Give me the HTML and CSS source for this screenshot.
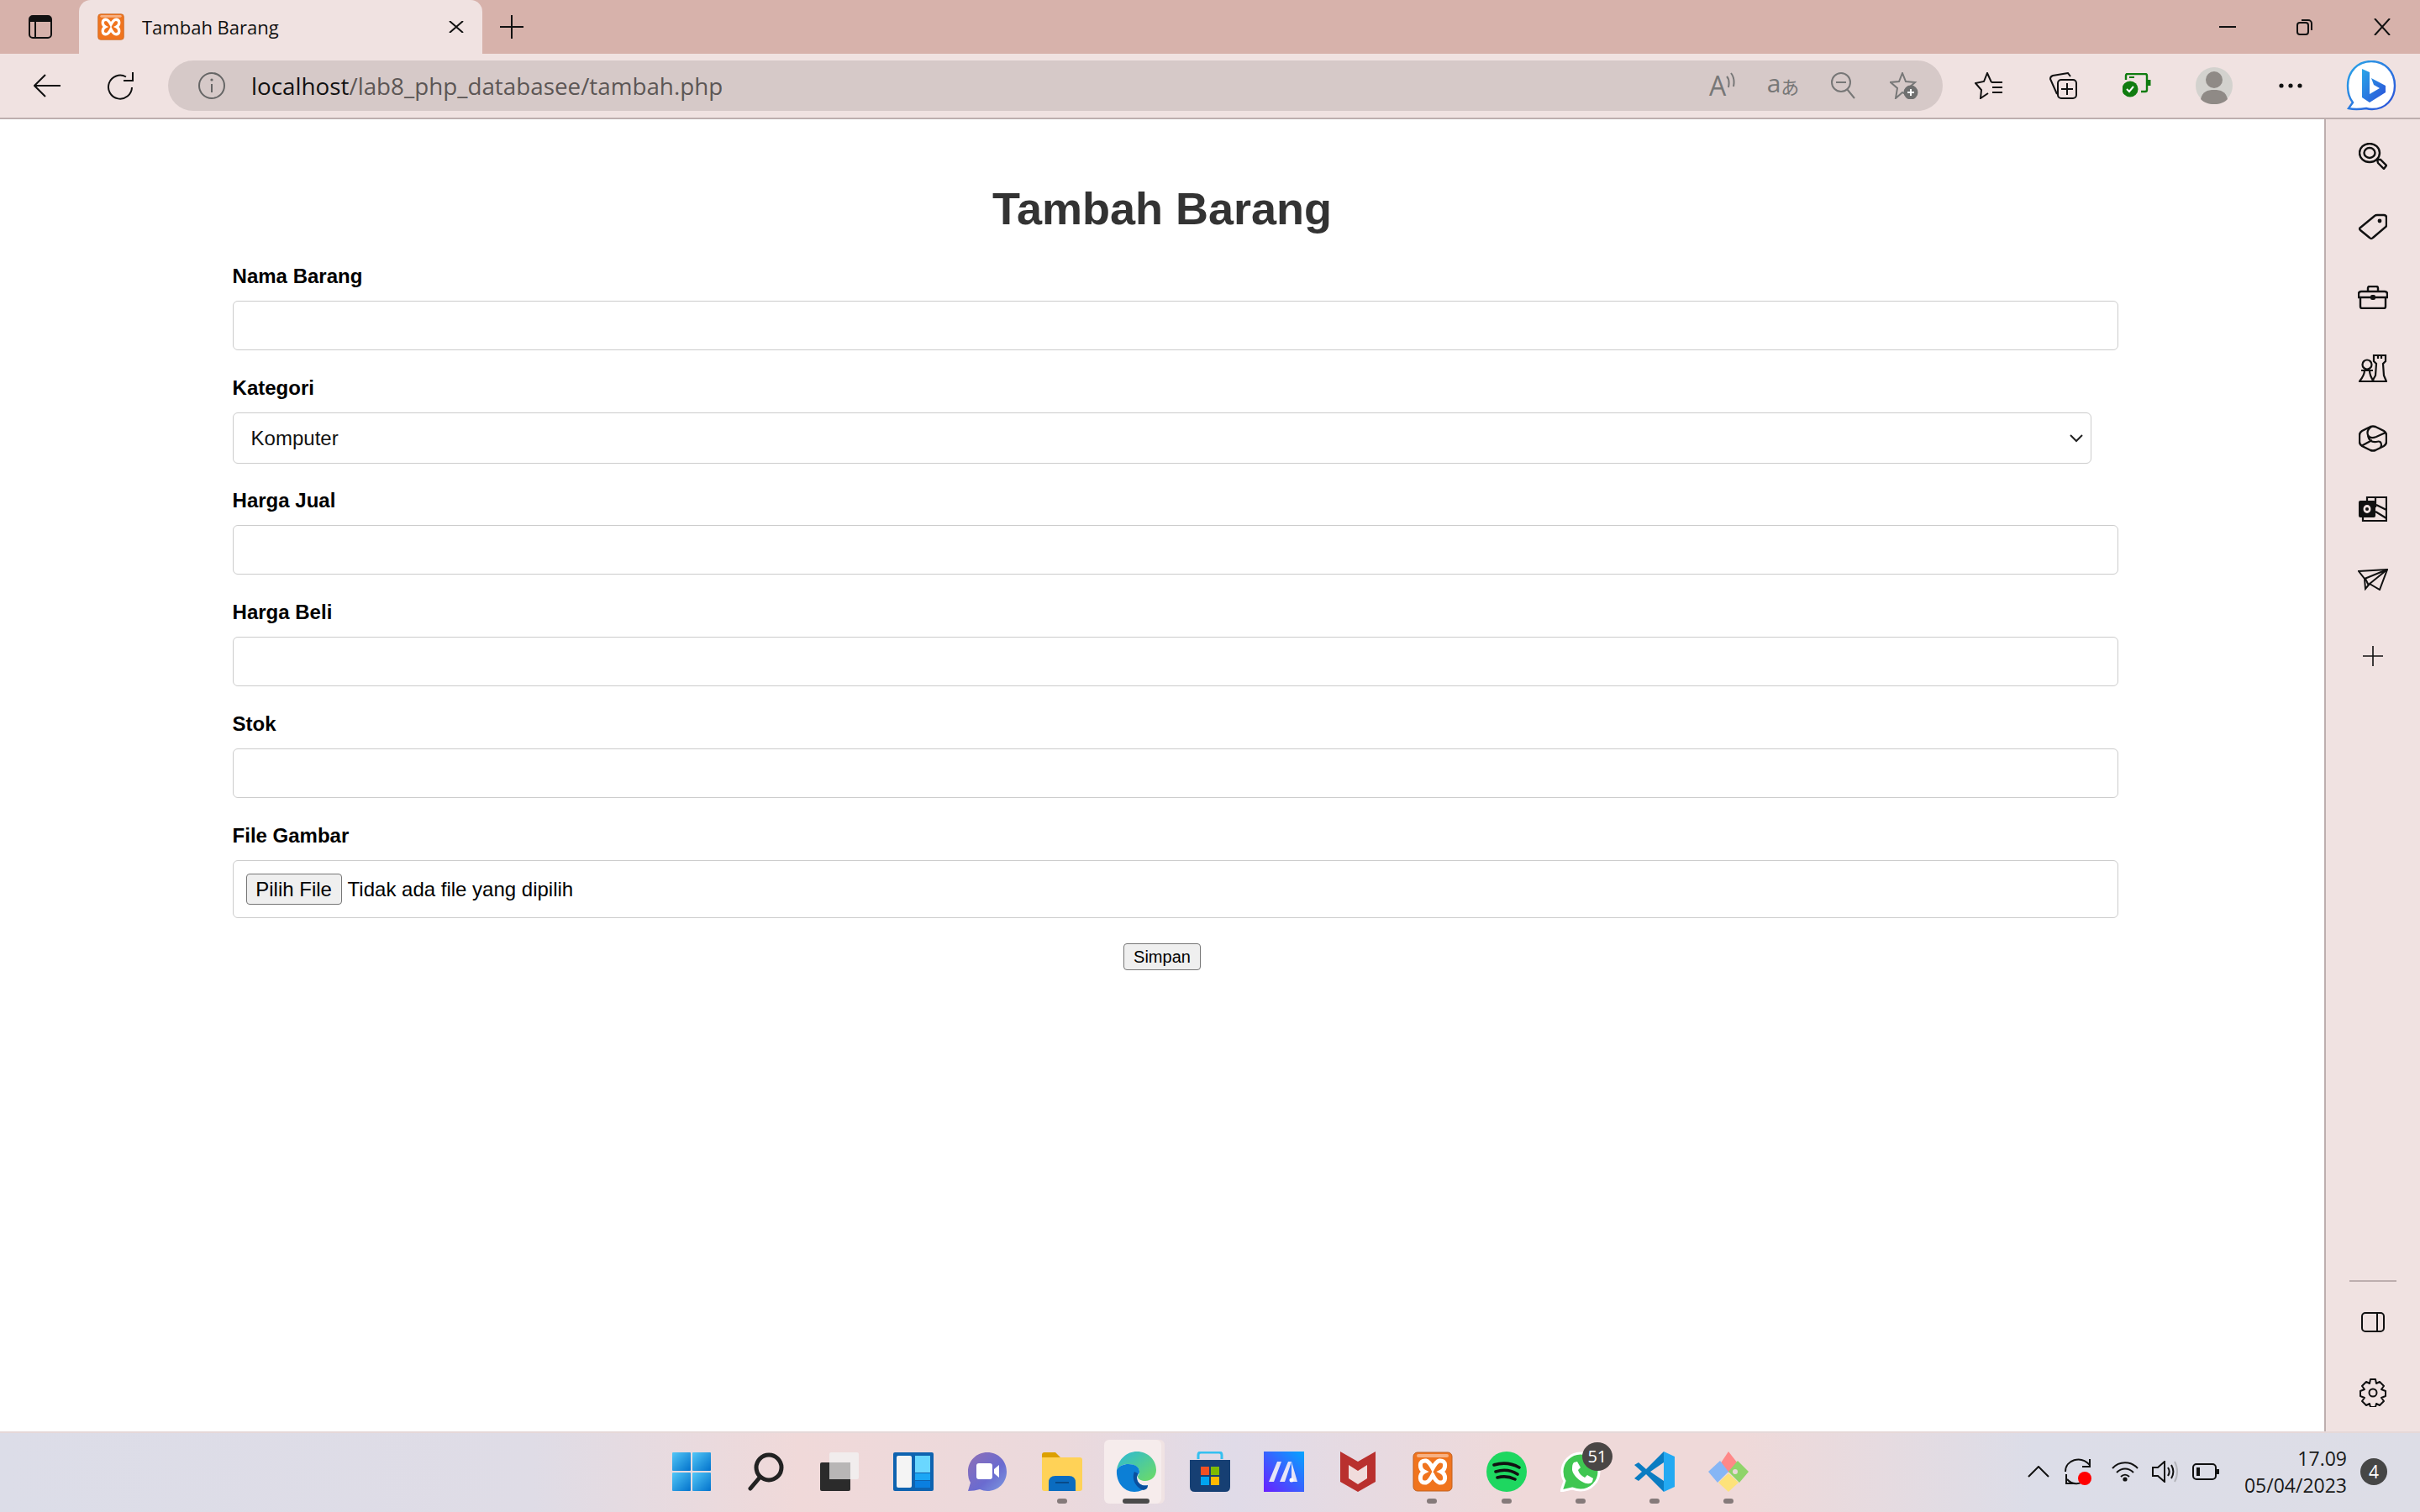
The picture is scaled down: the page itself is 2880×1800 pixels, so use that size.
FILE: index.html
```html
<!DOCTYPE html>
<html lang="en">
  <head>
    <meta charset="UTF-8" />
    <title>Tambah Barang</title>
    <link rel="stylesheet" href="styles.css">
  </head>
  <body>
    <svg class="defs" width="0" height="0">
      <defs>
        <linearGradient id="winGrad" x1="0" y1="0" x2="1" y2="1"><stop offset="0" stop-color="#52c7f7"/><stop offset="1" stop-color="#0272cc"/></linearGradient>
        <linearGradient id="edgeGrad" x1="0" y1="0" x2="1" y2="1"><stop offset="0" stop-color="#2bb8d8"/><stop offset="1" stop-color="#6fdc62"/></linearGradient>
        <linearGradient id="chatGrad" x1="0" y1="0" x2="1" y2="1"><stop offset="0" stop-color="#8f6fb6"/><stop offset=".6" stop-color="#6a6bd0"/><stop offset="1" stop-color="#7d9be0"/></linearGradient>
        <linearGradient id="maGrad" x1="0" y1="1" x2="1" y2="0"><stop offset="0" stop-color="#6a1fff"/><stop offset="1" stop-color="#05a5ff"/></linearGradient>
        <linearGradient id="bingGrad" x1="0" y1="0" x2="1" y2="1"><stop offset="0" stop-color="#2aa7e8"/><stop offset="1" stop-color="#2b4fd8"/></linearGradient>
        <symbol id="xampp" viewBox="0 0 48 48">
          <rect x="1" y="1" width="46" height="46" rx="5" fill="#f0741e" stroke="#c2601e"/>
          <rect x="5" y="3" width="38" height="4" rx="2" fill="#f7b184"/>
          <path d="M16 11C7 10 8 21 14 24C8 27 7 38 16 37C20 36 22 32 24 28C26 32 28 36 32 37C41 38 40 27 34 24C40 21 41 10 32 11C28 12 26 16 24 20C22 16 20 12 16 11Z" fill="#f0741e" stroke="#fff" stroke-width="5"/>
        </symbol>
      </defs>
    </svg>

    <div class="tabstrip">
      <div class="tab-toggle">
        <svg width="28" height="28" viewBox="0 0 28 28"><rect x="1" y="1" width="26" height="26" rx="4" fill="none" stroke="#111" stroke-width="2"/><path d="M2 2h24v6H2z" fill="#111"/><path d="M8 8v18" stroke="#111" stroke-width="2"/></svg>
      </div>
      <div class="tab">
        <svg class="favicon" width="32" height="32"><use href="#xampp"/></svg>
        <span class="tab-title">Tambah Barang</span>
        <svg class="tab-close" width="18" height="14" viewBox="0 0 18 14"><path d="M1 0l16 14M17 0L1 14" stroke="#111" stroke-width="2"/></svg>
      </div>
      <svg class="new-tab" width="28" height="28" viewBox="0 0 28 28"><path d="M14 0v28M0 14h28" stroke="#111" stroke-width="2"/></svg>
      <div class="window-controls">
        <svg width="20" height="20" viewBox="0 0 20 20"><path d="M0 10h20" stroke="#111" stroke-width="2"/></svg>
        <svg width="20" height="20" viewBox="0 0 20 20"><rect x="1" y="5" width="13" height="14" rx="3" fill="none" stroke="#111" stroke-width="2"/><path d="M6 2h8a4 4 0 0 1 4 4v8" fill="none" stroke="#111" stroke-width="2"/></svg>
        <svg width="20" height="20" viewBox="0 0 20 20"><path d="M1 0l18 20M19 0L1 20" stroke="#111" stroke-width="2"/></svg>
      </div>
    </div>

    <div class="toolbar">
      <div class="tool">
        <svg width="32" height="28" viewBox="0 0 32 28"><path d="M32 14H2M14 1L1 14l13 13" fill="none" stroke="#111" stroke-width="2"/></svg>
      </div>
      <div class="tool">
        <svg width="34" height="33" viewBox="0 0 34 33"><path d="M23 5.500A14 14 0 1 0 30 18" fill="none" stroke="#111" stroke-width="2"/><path d="M31 0v10H20" fill="none" stroke="#111" stroke-width="2"/></svg>
      </div>
      <div class="address">
        <svg class="info" width="32" height="32" viewBox="0 0 32 32"><circle cx="16" cy="16" r="15" fill="none" stroke="#666" stroke-width="2"/><path d="M16 14v10" stroke="#666" stroke-width="2"/><circle cx="16" cy="9" r="1.600" fill="#666"/></svg>
        <span class="url"><span class="host">localhost</span>/lab8_php_databasee/tambah.php</span>
        <div class="omni-icons">
          <div class="omni omni-read">
            <span class="omni-a">A</span>
            <svg width="12" height="20" viewBox="0 0 12 20"><path d="M1 5c3 3 3 8 2 13M6 1c4 5 4 11 3 16" fill="none" stroke="#777" stroke-width="2"/></svg>
          </div>
          <div class="omni">
            <span class="omni-tr">a</span><span class="omni-tr2">あ</span>
          </div>
          <div class="omni">
            <svg width="30" height="32" viewBox="0 0 30 32"><circle cx="12" cy="12" r="11" fill="none" stroke="#777" stroke-width="2"/><path d="M6 12h12M19 20l9 11" fill="none" stroke="#777" stroke-width="2"/></svg>
          </div>
          <div class="omni">
            <svg width="34" height="32" viewBox="0 0 34 32"><path d="M15 1l4 10 11 1-8 7 2 10-9-5-8 7 2-12-8-7 10-1z" fill="none" stroke="#777" stroke-width="2"/><circle cx="25" cy="24" r="8.500" fill="#6f6f6f"/><path d="M25 20v8M21 24h8" stroke="#fff" stroke-width="2"/></svg>
          </div>
        </div>
      </div>
      <div class="tool tool-fav">
        <svg width="34" height="32" viewBox="0 0 34 32"><path d="M20 12L15 1 11 11 1 13l7 8-1 10 9-6" fill="none" stroke="#111" stroke-width="2"/><path d="M20 12h13M21 18h12M21 24h12" stroke="#111" stroke-width="2"/></svg>
      </div>
      <div class="tool">
        <svg width="34" height="32" viewBox="0 0 34 32"><path d="M10 26L2 8q0-3 3-4l18-3 3 4" fill="none" stroke="#111" stroke-width="2"/><rect x="11" y="9" width="22" height="22" rx="4" fill="none" stroke="#111" stroke-width="2"/><path d="M22 13v14M15 20h14" stroke="#111" stroke-width="2"/></svg>
      </div>
      <div class="tool">
        <svg width="34" height="30" viewBox="0 0 34 30"><path d="M4 8V3q0-2 2-2h21q2 0 2 2v17q0 2-2 2h-5" fill="none" stroke="#107c10" stroke-width="2.400"/><rect x="30" y="8" width="3.500" height="7" fill="#107c10"/><path d="M8 5h6" stroke="#107c10" stroke-width="2"/><circle cx="9" cy="19" r="9.500" fill="#107c10"/><path d="M5 19l3 3 5-6" fill="none" stroke="#fff" stroke-width="2"/></svg>
      </div>
      <div class="tool tool-avatar">
        <svg width="44" height="44" viewBox="0 0 44 44"><circle cx="22" cy="22" r="22" fill="#d3d2ce"/><ellipse cx="22" cy="15" rx="10" ry="10" fill="#8f8a86"/><path d="M6 38c2-9 8-11 16-11s14 2 16 11c-4 4-9 6-16 6S10 42 6 38z" fill="#8f8a86"/></svg>
      </div>
      <div class="tool tool-more">
        <svg width="28" height="6" viewBox="0 0 28 6"><circle cx="3" cy="3" r="2.600" fill="#111"/><circle cx="14" cy="3" r="2.600" fill="#111"/><circle cx="25" cy="3" r="2.600" fill="#111"/></svg>
      </div>
      <div class="tool tool-bing">
        <svg width="60" height="60" viewBox="0 0 60 60"><path d="M30 1C14 1 2 13 2 30c0 8 2 15 6 20l-5 7c8 2 15 1 21 0 3 1 5 1 7 1 16 0 27-12 27-28C58 13 46 1 30 1z" fill="#fff" stroke="url(#bingGrad)" stroke-width="2.400"/><path d="M19 10l9 4v26l12-7-7-4-3-8 17 9v8L28 50l-9-6z" fill="url(#bingGrad)"/></svg>
      </div>
    </div>

    <div class="main">
      <div class="page">
        <h1>Tambah Barang</h1>
        <form class="form">
          <label for="nama">Nama Barang</label>
          <input type="text" id="nama" />

          <label for="kategori">Kategori</label>
          <div class="select-wrap">
            <select id="kategori">
              <option>Komputer</option>
            </select>
            <svg class="select-arrow" width="16" height="10" viewBox="0 0 16 10"><path d="M1 1l7 7 7-7" fill="none" stroke="#222" stroke-width="2"/></svg>
          </div>

          <label for="jual">Harga Jual</label>
          <input type="text" id="jual" />

          <label for="beli">Harga Beli</label>
          <input type="text" id="beli" />

          <label for="stok">Stok</label>
          <input type="text" id="stok" />

          <label>File Gambar</label>
          <div class="file-box">
            <button type="button" class="file-btn">Pilih File</button>
            <span>Tidak ada file yang dipilih</span>
          </div>

          <div class="actions">
            <button type="button" class="save-btn">Simpan</button>
          </div>
        </form>
      </div>

      <div class="sidebar">
        <div class="side-item">
          <svg width="34" height="32" viewBox="0 0 34 32"><ellipse cx="13" cy="12" rx="12" ry="11" fill="none" stroke="#111" stroke-width="2.400"/><ellipse cx="13" cy="12" rx="6.500" ry="6" fill="none" stroke="#111" stroke-width="2.400"/><path d="M22 20l4 0 7 7-3 4-7-7z" fill="none" stroke="#111" stroke-width="2.400"/></svg>
        </div>
        <div class="side-item">
          <svg width="34" height="32" viewBox="0 0 34 32"><path d="M2 17L19 3q1-1 3-1h8q3 0 3 3v9q0 2-2 3L17 29q-2 2-4 0L2 20q-2-2 0-3z" fill="none" stroke="#111" stroke-width="2.400"/><circle cx="25" cy="9" r="2.400" fill="#111"/></svg>
        </div>
        <div class="side-item">
          <svg width="36" height="28" viewBox="0 0 36 28"><path d="M12 7V3q0-2 2-2h8q2 0 2 2v4" fill="none" stroke="#111" stroke-width="2.400"/><path d="M1 10q0-3 3-3h28q3 0 3 3v4H1zM3 14v11q0 2 2 2h26q2 0 2-2V14" fill="none" stroke="#111" stroke-width="2.400"/><rect x="15" y="11" width="6" height="6" rx="2" fill="#111"/></svg>
        </div>
        <div class="side-item">
          <svg width="34" height="34" viewBox="0 0 34 34"><path d="M18 2h14v7l-3 3 1 14 3 7H16l4-7 1-14-3-3zM23 2v4M27 2v4" fill="none" stroke="#111" stroke-width="2.200"/><circle cx="10" cy="13" r="5.500" fill="none" stroke="#111" stroke-width="2.200"/><path d="M3 20h14M7 20c0 5-2 8-6 13h17c-3-4-5-8-5-13" fill="none" stroke="#111" stroke-width="2.200"/></svg>
        </div>
        <div class="side-item">
          <svg width="34" height="32" viewBox="0 0 34 32"><path d="M14 2q3-1 6 0l10 5q3 2 3 5v8q0 3-3 5l-10 5q-3 1-6 0L4 25q-3-2-3-5v-8q0-3 3-5z" fill="none" stroke="#111" stroke-width="2.400"/><path d="M32 9L21 14Q13 17 11 12Q9 6 15 2M11 13Q13 21 21 20Q27 18 27 24L26 27M3 25L16 18" fill="none" stroke="#111" stroke-width="2.200"/></svg>
        </div>
        <div class="side-item">
          <svg width="34" height="30" viewBox="0 0 34 30"><path d="M10 6V1h23v28H5v-7M20 1v12M33 16L21 10M33 26L20 18" fill="none" stroke="#111" stroke-width="2.200"/><rect x="0" y="5" width="20" height="20" rx="2" fill="#111"/><ellipse cx="10" cy="15" rx="4.500" ry="5" fill="#f0e2e1"/><circle cx="10" cy="15" r="2" fill="#111"/></svg>
        </div>
        <div class="side-item">
          <svg width="36" height="26" viewBox="0 0 36 26"><path d="M1 3L35 1 26 25l-12-7-5 6-1-12z" fill="none" stroke="#111" stroke-width="2"/><path d="M8 12L35 1 14 18M9 12l4 8" fill="none" stroke="#111" stroke-width="2"/></svg>
        </div>
        <div class="side-item side-add">
          <svg width="24" height="24" viewBox="0 0 24 24"><path d="M12 0v24M0 12h24" stroke="#111" stroke-width="1.600"/></svg>
        </div>
        <div class="side-bottom">
          <div class="side-rule"></div>
          <div class="side-item">
            <svg width="28" height="24" viewBox="0 0 28 24"><rect x="1" y="1" width="26" height="22" rx="4" fill="none" stroke="#111" stroke-width="2"/><path d="M19 1v22" stroke="#111" stroke-width="2"/></svg>
          </div>
          <div class="side-item">
            <svg width="32" height="34" viewBox="0 0 32 34"><path d="M13 1h6l1 5 4-2 5 5-3 4 5 2v6l-5 2 3 4-5 5-4-2-1 4h-6l-1-4-4 2-5-5 3-4-5-2v-6l5-2-3-4 5-5 4 2z" fill="none" stroke="#111" stroke-width="2" stroke-linejoin="round"/><circle cx="16" cy="17" r="4.500" fill="none" stroke="#111" stroke-width="2"/></svg>
          </div>
        </div>
      </div>
    </div>

    <div class="taskbar">
      <div></div>
      <div class="apps">
        <div class="app">
          <svg width="46" height="46" viewBox="0 0 46 46"><g fill="url(#winGrad)"><rect width="22" height="22" rx="1"/><rect x="24" width="22" height="22" rx="1"/><rect y="24" width="22" height="22" rx="1"/><rect x="24" y="24" width="22" height="22" rx="1"/></g></svg>
        </div>
        <div class="app">
          <svg width="44" height="46" viewBox="0 0 44 46"><ellipse cx="26" cy="18" rx="15" ry="15" fill="none" stroke="#222" stroke-width="5"/><path d="M15 30L4 43" stroke="#222" stroke-width="5" stroke-linecap="round"/></svg>
        </div>
        <div class="app">
          <svg width="48" height="46" viewBox="0 0 48 46"><rect x="1" y="12" width="36" height="34" rx="2" fill="#2b2b2b"/><rect x="12" y="0" width="35" height="32" rx="2" fill="#f1eded"/><rect x="12" y="12" width="25" height="20" fill="#b8b6b6"/></svg>
        </div>
        <div class="app">
          <svg width="48" height="46" viewBox="0 0 48 46"><rect width="48" height="46" rx="2" fill="#0e63b0"/><rect x="4" y="4" width="18" height="38" rx="2" fill="#f4f4f4"/><rect x="26" y="4" width="18" height="20" fill="#6ad7ff"/><rect x="26" y="25" width="18" height="8" fill="#1ba7f5"/><rect x="26" y="34" width="18" height="8" fill="#0a7fe0"/></svg>
        </div>
        <div class="app">
          <svg width="46" height="46" viewBox="0 0 46 46"><path d="M23 0C10 0 0 10 0 23c0 6 1 10 3 13L0 46c5 0 10-1 14-2 3 1 6 2 9 2 13 0 23-10 23-23S36 0 23 0z" fill="url(#chatGrad)"/><rect x="10" y="13" width="19" height="19" rx="3" fill="#fff"/><path d="M31 20l6-5v15l-6-5z" fill="#fff"/></svg>
        </div>
        <div class="app running">
          <svg width="48" height="46" viewBox="0 0 48 46"><path d="M0 3q0-3 3-3h13l6 6h-22z" fill="#dca000"/><path d="M0 6h45q3 0 3 3v34q0 3-3 3H3q-3 0-3-3z" fill="#ffd257"/><path d="M8 46V36q0-8 8-8h16q8 0 8 8v10z" fill="#0a6cc0"/><path d="M16 36h16" stroke="#084a88" stroke-width="2"/></svg>
        </div>
        <div class="app active running">
          <svg width="48" height="48" viewBox="0 0 48 48"><path d="M1 22C3 9 13 0 25 0c13 0 23 10 23 22 0 8-6 13-13 13-4 0-9-2-9-5 0-2 2-2 2-6 0-6-7-9-13-9-7 0-12 3-14 7z" fill="url(#edgeGrad)"/><path d="M1 22c3-5 8-7 14-7 7 0 13 3 13 9 0 3-3 4-3 7 0 8 8 11 13 9-4 5-9 8-16 8C9 48 0 36 1 22z" fill="#0c7fd6"/><path d="M22 24c-3 6-1 18 11 22 3-1 5-2 5-6-5 2-13-1-13-9 0-2 1-3 1-5z" fill="#0a4f9e"/></svg>
        </div>
        <div class="app">
          <svg width="48" height="48" viewBox="0 0 48 48"><path d="M10 9V4q0-3 3-3h22q3 0 3 3v5" fill="none" stroke="#35c0f0" stroke-width="3"/><path d="M0 10h48v32q0 6-6 6H6q-6 0-6-6z" fill="#163f73"/><rect x="13" y="18" width="10" height="10" fill="#f25022"/><rect x="25" y="18" width="10" height="10" fill="#7fba00"/><rect x="13" y="30" width="10" height="10" fill="#00a4ef"/><rect x="25" y="30" width="10" height="10" fill="#ffb900"/></svg>
        </div>
        <div class="app">
          <svg width="48" height="48" viewBox="0 0 48 48"><rect width="48" height="48" fill="url(#maGrad)"/><path d="M6 36l10-24h5L12 36zM19 36l10-24h4L25 36zM33 12l7 24h-7z" fill="#e6e4f7"/><circle cx="33" cy="34" r="2.500" fill="#fff"/></svg>
        </div>
        <div class="app">
          <svg width="42" height="48" viewBox="0 0 42 48"><path d="M0 0l21 12L42 0v36L21 48 0 36z" fill="#b9302e"/><path d="M10 16l11 7 11-7v16l-11 7-11-7z" fill="#f0dcdc"/></svg>
        </div>
        <div class="app running">
          <svg width="48" height="48"><use href="#xampp"/></svg>
        </div>
        <div class="app running">
          <svg width="48" height="48" viewBox="0 0 48 48"><circle cx="24" cy="24" r="24" fill="#1ed760"/><path d="M9 16c10-3 21-2 30 3M11 24c9-3 18-2 26 3M13 31c7-2 15-1 21 2" fill="none" stroke="#111" stroke-width="3.600" stroke-linecap="round"/></svg>
        </div>
        <div class="app running">
          <svg width="48" height="48" viewBox="0 0 48 48"><path d="M24 2C12 2 2 12 2 24c0 4 1 8 3 11L1 47l13-3c3 1 6 2 10 2 12 0 22-10 22-22S36 2 24 2z" fill="#3fc651" stroke="#fff" stroke-width="3"/><path d="M16 13l4-1 4 7-3 3c1 4 4 7 8 9l3-3 7 4-1 4c-2 3-7 3-12 0-6-3-11-9-12-14 0-4 0-7 2-9z" fill="#fff"/></svg>
          <span class="badge">51</span>
        </div>
        <div class="app running">
          <svg width="48" height="48" viewBox="0 0 48 48"><path d="M35 0l13 6v36l-13 6z" fill="#23a9f2"/><path d="M35 0L14 21 5 13 0 16l9 8-9 8 5 3 9-8 21 21V35L19 24 35 13z" fill="#0a7cc2"/></svg>
        </div>
        <div class="app running">
          <svg width="48" height="48" viewBox="0 0 48 48"><path d="M24 0l11 14-11 11-4-4-6-6z" fill="#f88"/><path d="M14 11L0 24l11 13 13-13z" fill="#86b6f5"/><path d="M35 11l13 13-11 13-13-13z" fill="#8fd46a"/><path d="M24 26l12 11-12 11-12-11z" fill="#fde27a"/><circle cx="32" cy="24" r="3" fill="#e9d8d8"/></svg>
        </div>
      </div>
      <div class="tray">
        <svg class="tray-chevron" width="26" height="14" viewBox="0 0 26 14"><path d="M1 13L13 1l12 12" fill="none" stroke="#111" stroke-width="2"/></svg>
        <div class="tray-sync">
          <svg width="32" height="34" viewBox="0 0 32 34"><path d="M1 17C1 3 19-3 30 9M27 23C20 34 9 33 3 26" fill="none" stroke="#111" stroke-width="2"/><path d="M30 2v9H21M2 20v11h9" fill="none" stroke="#111" stroke-width="2"/><circle cx="24" cy="25" r="8" fill="#f00"/></svg>
        </div>
        <svg class="tray-wifi" width="32" height="24" viewBox="0 0 32 24"><path d="M1 8c8-9 22-9 30 0M6 13c6-6 14-6 20 0M11 18c3-3 7-3 10 0" fill="none" stroke="#111" stroke-width="2"/><circle cx="16" cy="21" r="2.600" fill="#111"/></svg>
        <svg class="tray-sound" width="32" height="26" viewBox="0 0 32 26"><path d="M1 8h6l8-7v24l-8-7H1z" fill="none" stroke="#111" stroke-width="2"/><path d="M19 8c2 3 2 7 0 10M23 5c3 5 3 11 0 16" fill="none" stroke="#111" stroke-width="2"/><path d="M27 1c4 7 4 17 0 24" fill="none" stroke="#b5b5bb" stroke-width="2"/></svg>
        <svg class="tray-battery" width="32" height="20" viewBox="0 0 32 20"><rect x="1" y="1" width="27" height="18" rx="4" fill="none" stroke="#111" stroke-width="2"/><rect x="5" y="5" width="4" height="10" fill="#111"/><rect x="29" y="7" width="3" height="6" fill="#111"/></svg>
        <div class="clock">
          <div>17.09</div>
          <div>05/04/2023</div>
        </div>
        <span class="notif">4</span>
      </div>
    </div>
  </body>
</html>
```

FILE: styles.css
```css
html,
body {
  margin: 0;
  height: 100%;
}

body {
  display: flex;
  flex-direction: column;
  height: 1800px;
  overflow: hidden;
  font-family: "Liberation Sans", Arial, sans-serif;
  background-color: #ffffff;
}

.defs {
  position: absolute;
}

svg {
  display: block;
  flex-shrink: 0;
}

/* browser chrome */
.tabstrip {
  display: flex;
  align-items: center;
  height: 64px;
  background-color: #d7b2ab;
}

.tab-toggle {
  width: 94px;
  padding-left: 34px;
  box-sizing: border-box;
}

.tab {
  display: flex;
  align-items: center;
  align-self: stretch;
  width: 480px;
  background-color: #f0e2e1;
  border-radius: 14px 14px 0 0;
  box-sizing: border-box;
  padding-left: 22px;
}

.tab-title {
  margin-left: 21px;
  font-family: "Open Sans", sans-serif;
  font-size: 22px;
  color: #111;
  flex: 1;
}

.tab-close {
  margin-right: 22px;
}

.new-tab {
  margin-left: 21px;
}

.window-controls {
  display: flex;
  align-items: center;
  gap: 72px;
  margin-left: auto;
  margin-right: 35px;
}

.toolbar {
  display: flex;
  align-items: center;
  height: 76px;
  padding-left: 12px;
  background-color: #f0e2e1;
  border-bottom: 2px solid #bdaeae;
}

.tool {
  display: flex;
  justify-content: center;
  align-items: center;
  width: 88px;
}

.address {
  display: flex;
  align-items: center;
  width: 2112px;
  height: 60px;
  margin-left: 12px;
  margin-right: 12px;
  padding-left: 36px;
  box-sizing: border-box;
  background-color: #d6c9c8;
  border-radius: 30px;
}

.url {
  margin-left: 31px;
  font-family: "Open Sans", sans-serif;
  font-size: 27.800px;
  color: #5c5655;
}

.host {
  color: #111;
}

.omni-icons {
  display: flex;
  margin-left: auto;
  margin-right: 10px;
}

.omni {
  display: flex;
  justify-content: center;
  align-items: center;
  width: 72px;
  height: 40px;
  color: #777;
  font-family: "Open Sans", sans-serif;
}

.omni-a {
  font-size: 32px;
  line-height: 40px;
}

.omni-read svg {
  margin-bottom: 12px;
}

.omni-tr {
  font-size: 30px;
  line-height: 40px;
  margin-top: -6px;
}

.omni-tr2 {
  font-family: "Noto Sans CJK JP", sans-serif;
  font-size: 22px;
  line-height: 40px;
}

.tool-fav {
  margin-left: -1px;
}

.tool-avatar {
  margin-left: 4px;
}

.tool-more {
  margin-left: 3px;
}

.tool-bing {
  margin-left: 8px;
}

/* page */
.main {
  display: flex;
  flex: 1;
  min-height: 0;
}

.page {
  flex: 1;
  min-width: 0;
  border-right: 2px solid #bdaeae;
}

h1 {
  margin: 75px 0 36px;
  text-align: center;
  font-size: 54px;
  line-height: 62px;
  color: #333;
}

.form {
  width: 80%;
  margin: 0 auto;
}

label {
  display: block;
  height: 28px;
  margin-bottom: 15px;
  font-size: 24px;
  line-height: 28px;
  font-weight: bold;
  color: #000;
}

input[type="text"] {
  display: block;
  width: 100%;
  height: 57px;
  padding: 0 15px;
  margin-bottom: 31px;
  border: 1px solid #ccc;
  border-radius: 6px;
  font-size: 24px;
  font-family: inherit;
}

.select-wrap {
  position: relative;
  margin-bottom: 30px;
}

select {
  display: block;
  width: 100%;
  height: 61px;
  padding: 0 0 0 21px;
  border: 1px solid #ccc;
  border-radius: 6px;
  background-color: #fff;
  font-size: 24px;
  font-family: inherit;
  color: #111;
  appearance: none;
}

.select-arrow {
  position: absolute;
  top: 26px;
  right: 10px;
}

.file-box {
  display: flex;
  align-items: center;
  width: 100%;
  height: 67px;
  padding: 0 15px;
  border: 1px solid #ccc;
  border-radius: 6px;
  font-size: 24px;
  color: #000;
}

.file-btn {
  width: 114px;
  height: 37px;
  margin: 0 7px 0 0;
  padding: 0;
  background-color: #efefef;
  border: 1px solid #767676;
  border-radius: 4px;
  font-size: 24px;
  font-family: inherit;
  color: #000;
}

.actions {
  margin-top: 30px;
  text-align: center;
}

.save-btn {
  width: 92px;
  height: 32px;
  padding: 0;
  background-color: #efefef;
  border: 1px solid #767676;
  border-radius: 4px;
  font-size: 20px;
  font-family: inherit;
  color: #000;
}

/* edge sidebar */
.sidebar {
  display: flex;
  flex-direction: column;
  width: 112px;
  background-color: #f0e2e1;
}

.side-item {
  display: flex;
  justify-content: center;
  align-items: center;
  flex-shrink: 0;
  height: 84px;
}

.sidebar > .side-item:first-child {
  margin-top: 2px;
}

.side-add {
  margin-top: 7px;
}

.side-bottom {
  margin-top: auto;
  padding-bottom: 4px;
}

.side-rule {
  height: 2px;
  margin: 0 28px 6px;
  background-color: #bdaeae;
}

/* windows taskbar */
.taskbar {
  display: grid;
  grid-template-columns: 1fr auto 1fr;
  height: 94px;
  border-top: 2px solid #e6d8d8;
  background: linear-gradient(90deg, #dcdde8 0%, #dfdce6 22%, #f0d9d9 33%, #ebd9dc 44%, #e0dbe8 51%, #efd9d9 63%, #efd9d9 72%, #dcdde8 84%, #dddde6 100%);
}

.apps {
  display: flex;
  align-items: center;
}

.app {
  position: relative;
  display: flex;
  justify-content: center;
  align-items: center;
  width: 88.200px;
  height: 94px;
  padding-bottom: 2px;
  box-sizing: border-box;
}

.app svg {
  position: relative;
}

.running::after {
  content: "";
  position: absolute;
  bottom: 10px;
  left: 38px;
  width: 12px;
  height: 6px;
  border-radius: 3px;
  background-color: #857a7a;
}

.active::before {
  content: "";
  position: absolute;
  top: 8px;
  left: 6px;
  width: 68px;
  height: 76px;
  border-radius: 6px;
  background-color: #f6ecec;
  box-shadow: 4px 0 0 #f0e3e3;
}

.active::after {
  left: 28px;
  width: 32px;
  background-color: #4b4b4b;
}

.badge {
  position: absolute;
  top: 11px;
  left: 46px;
  width: 36px;
  height: 34px;
  border-radius: 50%;
  background-color: #4a4645;
  color: #fff;
  font-family: "Open Sans", sans-serif;
  font-size: 20px;
  line-height: 34px;
  text-align: center;
}

.tray {
  display: flex;
  align-items: center;
  justify-self: end;
  margin-right: 39px;
  padding-bottom: 2px;
}

.tray-chevron {
  margin-right: 18px;
}

.tray-wifi {
  margin-left: 24px;
}

.tray-sound {
  margin-left: 16px;
}

.tray-battery {
  margin-left: 16px;
}

.clock {
  margin-left: 30px;
  font-family: "Open Sans", sans-serif;
  font-size: 23px;
  line-height: 32px;
  text-align: right;
  color: #1a1a1a;
}

.notif {
  width: 32px;
  height: 32px;
  margin-left: 16px;
  border-radius: 50%;
  background-color: #464646;
  color: #fff;
  font-family: "Open Sans", sans-serif;
  font-size: 21px;
  line-height: 32px;
  text-align: center;
}
```
